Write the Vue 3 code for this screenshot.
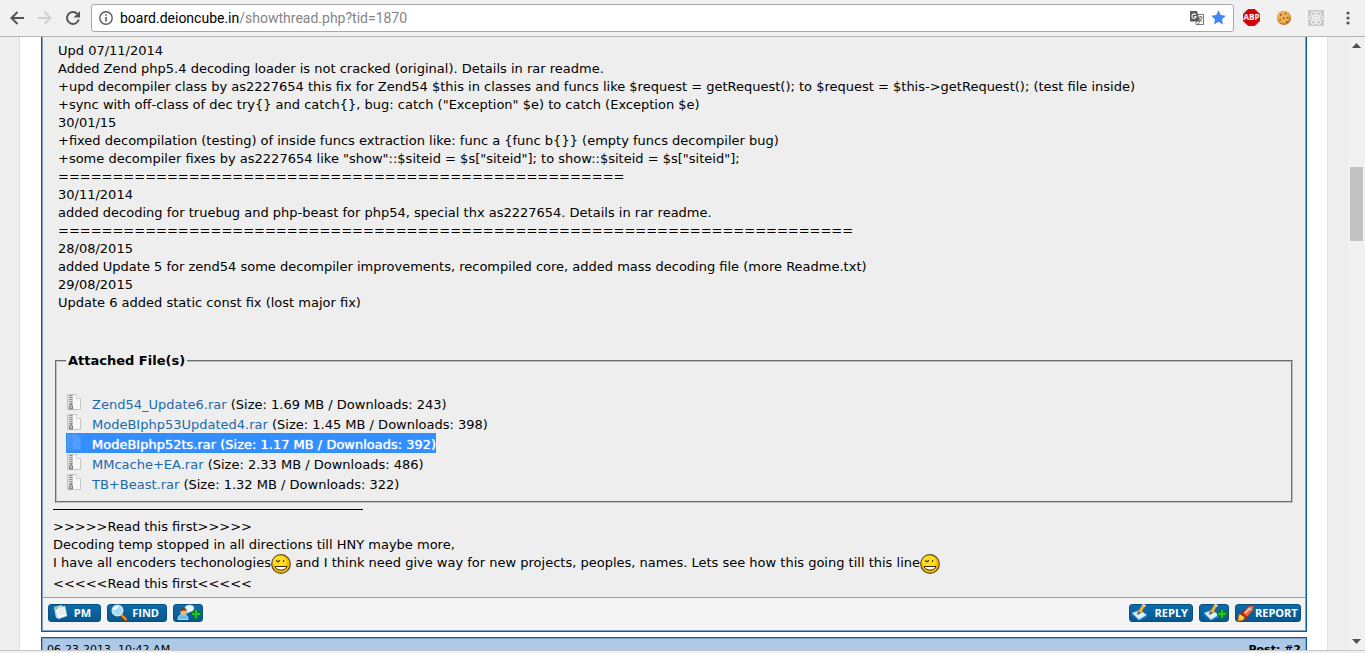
<script setup>
import { ref } from 'vue'

const address = ref('board.deioncube.in/showthread.php?tid=1870')

const lines = [
  'Upd 07/11/2014',
  'Added Zend php5.4 decoding loader is not cracked (original). Details in rar readme.',
  '+upd decompiler class by as2227654 this fix for Zend54 $this in classes and funcs like $request = getRequest(); to $request = $this->getRequest(); (test file inside)',
  '+sync with off-class of dec try{} and catch{}, bug: catch ("Exception" $e) to catch (Exception $e)',
  '30/01/15',
  '+fixed decompilation (testing) of inside funcs extraction like: func a {func b{}} (empty funcs decompiler bug)',
  '+some decompiler fixes by as2227654 like "show"::$siteid = $s["siteid"]; to show::$siteid = $s["siteid"];',
  '='.repeat(52),
  '30/11/2014',
  'added decoding for truebug and php-beast for php54, special thx as2227654. Details in rar readme.',
  '='.repeat(73),
  '28/08/2015',
  'added Update 5 for zend54 some decompiler improvements, recompiled core, added mass decoding file (more Readme.txt)',
  '29/08/2015',
  'Update 6 added static const fix (lost major fix)',
]

const files = [
  { name: 'Zend54_Update6.rar', size: '1.69 MB', downloads: 243 },
  { name: 'ModeBIphp53Updated4.rar', size: '1.45 MB', downloads: 398 },
  { name: 'ModeBIphp52ts.rar', size: '1.17 MB', downloads: 392, selected: true },
  { name: 'MMcache+EA.rar', size: '2.33 MB', downloads: 486 },
  { name: 'TB+Beast.rar', size: '1.32 MB', downloads: 322 },
]
</script>

<template>
  <div class="browser">
    <svg class="defs" aria-hidden="true">
      <symbol id="smile" viewBox="0 0 20 20">
        <circle cx="10" cy="10" r="9.300" fill="#f5bd08" stroke="#5a4a20" stroke-width="1.200" />
        <ellipse cx="9" cy="8" rx="7" ry="6.500" fill="#ffdc20" />
        <path d="M5 6.500l2 1.300 2-1.500M12.600 6v2" fill="none" stroke="#4a3300" stroke-width="1.100" />
        <path d="M4 12.500h12c-1 2.600-3.200 3.600-6 3.600s-5-1-6-3.600z" fill="#fff" stroke="#3d2a00" stroke-width="1" />
      </symbol>
      <symbol id="plus" viewBox="0 0 10 10">
        <path d="M3.500 .5h3v3h3v3h-3v3h-3v-3h-3v-3h3z" fill="#25c425" stroke="#087a16" stroke-width="1" />
      </symbol>
      <symbol id="pen" viewBox="0 0 18 18">
        <path d="M1 9l8-3 7 5-8 5z" fill="#d9efff" stroke="#5fa4dc" stroke-width="1" />
        <path d="M1 10l7 6 8-5v2l-8 4-7-6z" fill="#2c7cc4" />
        <path d="M6 11l1-4 3 2z" fill="#36506a" />
        <path d="M7 8l4-7 3 1-4 7z" fill="#f4b83c" stroke="#ad6c16" stroke-width=".6" />
        <path d="M11 1l1-1 3 1-1 2z" fill="#f7e4c0" />
      </symbol>
    </svg>

    <header class="toolbar">
      <button class="tool" type="button" aria-label="Back">
        <svg width="16" height="16" viewBox="0 0 16 16"><path d="M15 8H3M8.500 2L2.500 8l6 6" fill="none" stroke="#555" stroke-width="2" /></svg>
      </button>
      <button class="tool" type="button" aria-label="Forward" disabled>
        <svg width="16" height="16" viewBox="0 0 16 16"><path d="M1 8h12M7.500 2l6 6-6 6" fill="none" stroke="#d0d0d0" stroke-width="2" /></svg>
      </button>
      <button class="tool" type="button" aria-label="Reload">
        <svg width="16" height="16" viewBox="0 0 16 16"><path d="M13.800 9.500A6 6 0 1 1 12.300 3.800" fill="none" stroke="#555" stroke-width="2" /><path d="M15 1v6.500H8.500z" fill="#555" /></svg>
      </button>
      <div class="omnibox">
        <svg width="14" height="14" viewBox="0 0 14 14"><circle cx="7" cy="7" r="6.200" fill="none" stroke="#5a5a5a" stroke-width="1.400" /><path d="M7 6v4.500M7 3.200v1.600" stroke="#5a5a5a" stroke-width="1.600" /></svg>
        <label class="url">
          <span class="host" aria-hidden="true">board.deioncube.in<i>/showthread.php?tid=1870</i></span>
          <input v-model="address" type="text" aria-label="Address" spellcheck="false" />
        </label>
        <button class="tool" type="button" aria-label="Translate">
          <svg width="14" height="14" viewBox="0 0 14 14"><path d="M6.500 3.500h7v10H6z" fill="#fff" stroke="#777" /><path d="M0 0h7l3 10.500H0z" fill="#5c5c5c" /><path d="M5.900 3.800A2.200 2.200 0 1 0 6 6.300V5.500H4.200" fill="none" stroke="#fff" stroke-width="1.100" /><path d="M8.500 6h4M10.500 5v1M12 6c-.5 2-1.500 3.500-2.500 4.500M9.500 7c.5 1.500 1.500 3 3 4M7.500 13.500l2.500-3" fill="none" stroke="#666" stroke-width=".9" /></svg>
        </button>
        <button class="tool" type="button" aria-label="Bookmark">
          <svg width="15" height="15" viewBox="0 0 15 15"><path d="M7.500 .3l2.200 4.800 5.100.6-3.800 3.500 1 5.300-4.500-2.700L3 14.500l1-5.300L.2 5.700l5.100-.6z" fill="#4285f4" /></svg>
        </button>
      </div>
      <div class="extensions">
        <button class="tool" type="button" aria-label="Adblock Plus">
          <svg width="17" height="17" viewBox="0 0 17 17"><path d="M5 .5h7L16.500 5v7L12 16.500H5L.5 12V5z" fill="#d0000c" stroke="#a80008" stroke-width=".8" /><text x="8.500" y="11" text-anchor="middle" class="abp">ABP</text></svg>
        </button>
        <button class="tool" type="button" aria-label="Cookies">
          <svg width="16" height="16" viewBox="0 0 16 16"><circle cx="8" cy="8" r="7" fill="#c87824" /><circle cx="7.500" cy="7" r="6.300" fill="#edae55" /><path d="M4 4h1.500v1.500H4zM9 3h1.300v1.300H9zM7 7.500h1.400v1.400H7zM3.500 9h1.300v1.300H3.500zM11 7h1.500v1.500H11zM10 11h1.400v1.400H10z" fill="#7b421b" /></svg>
        </button>
        <button class="tool" type="button" aria-label="React tools">
          <svg width="16" height="16" viewBox="0 0 16 16"><path d="M0 0h16v16H0z" fill="#cacaca" /><g fill="none" stroke="#f3f3f3"><ellipse cx="8" cy="8" rx="7" ry="2.700" /><ellipse cx="8" cy="8" rx="7" ry="2.700" transform="rotate(60 8 8)" /><ellipse cx="8" cy="8" rx="7" ry="2.700" transform="rotate(120 8 8)" /></g><circle cx="8" cy="8" r="1.500" fill="#fff" /></svg>
        </button>
        <button class="tool" type="button" aria-label="Menu">
          <svg width="4" height="14" viewBox="0 0 4 14"><g fill="#555"><circle cx="2" cy="2" r="1.600" /><circle cx="2" cy="7" r="1.600" /><circle cx="2" cy="12" r="1.600" /></g></svg>
        </button>
      </div>
    </header>

    <div class="viewport">
      <main class="page">
        <article class="post">
          <div class="body">
            <div class="message">
              <div v-for="(line, i) in lines" :key="i">{{ line }}</div>
            </div>
            <fieldset class="attachments">
              <legend>Attached File(s)</legend>
              <ul>
                <li v-for="file in files" :key="file.name">
                  <span class="file" :class="{ selected: file.selected }">
                    <svg class="zip" width="16" height="20" viewBox="0 0 16 20">
                      <path d="M1.500 1.500h9l4 4v11h-13z" fill="#f8f8f8" stroke="#c6c6c6" />
                      <path d="M10.500 1.500v4h4" fill="#fff" stroke="#ccc" />
                      <path d="M2 2h5v14H2z" fill="#dadada" />
                      <path d="M5 2v10" stroke="#888" stroke-width="3" stroke-dasharray="1 1" />
                      <path d="M3.500 13.500l1-2h1l1 2v2.500h-3z" fill="#bbb" stroke="#777" />
                    </svg>
                    <span><a href="#">{{ file.name }}</a> (Size: {{ file.size }} / Downloads: {{ file.downloads }})</span>
                  </span>
                </li>
              </ul>
            </fieldset>
            <div class="signature">
              <hr />
              <div>&gt;&gt;&gt;&gt;&gt;Read this first&gt;&gt;&gt;&gt;&gt;</div>
              <div>Decoding temp stopped in all directions till HNY maybe more,</div>
              <div class="smiley-line">I have all encoders techonologies<svg class="smiley"><use href="#smile" /></svg> and I think need give way for new projects, peoples, names. Lets see how this going till this line<svg class="smiley"><use href="#smile" /></svg></div>
              <div>&lt;&lt;&lt;&lt;&lt;Read this first&lt;&lt;&lt;&lt;&lt;</div>
            </div>
          </div>
          <footer class="controls">
            <div class="group">
              <button class="action pm" type="button">
                <svg width="18" height="18" viewBox="0 0 18 18"><path d="M2 3l8-2 2 11-8 2z" fill="#c9e6f8" /><path d="M3 5l10-3 2 10-9 3z" fill="#f5faff" stroke="#9db8cf" stroke-width=".6" /><path d="M6 7l6-2M6 9l7-2M7 11l6-2" stroke="#c3d0dc" stroke-width=".7" /><path d="M2 3l4-1-1 4z" fill="#7bd04c" /></svg>
                <span>PM</span>
              </button>
              <button class="action find" type="button">
                <svg width="18" height="18" viewBox="0 0 18 18"><path d="M10 11l5 5" stroke="#7b3d12" stroke-width="3.500" stroke-linecap="round" /><path d="M10.500 11l4.500 4.500" stroke="#f49a35" stroke-width="1.800" stroke-linecap="round" /><circle cx="6.500" cy="6.500" r="5.300" fill="#a5ddf8" stroke="#d5e7f2" stroke-width="1.400" /><path d="M3.500 6c0-2 2-3 3.500-2.500" fill="none" stroke="#fff" stroke-width="2" /></svg>
                <span>FIND</span>
              </button>
              <button class="action icon" type="button" aria-label="Add buddy">
                <svg width="24" height="18" viewBox="0 0 24 18"><path d="M9 2c3-2 8-1 8 2s-3 4-5 4l-3 2 1-3C8 6 7 4 9 2z" fill="#eef6ff" stroke="#9fc5e8" stroke-width=".6" /><path d="M1 15.500c0-4 2-5 5-5s5 1 5 5z" fill="#6bb9f2" stroke="#d2edff" stroke-width=".8" /><circle cx="6.500" cy="8" r="3.200" fill="#efb77a" /><path d="M3 7.500c0-4 6-5 7-1L6 6.500z" fill="#743b1b" /></svg>
                <svg class="add" width="10" height="10"><use href="#plus" /></svg>
              </button>
            </div>
            <div class="group">
              <button class="action reply" type="button">
                <svg width="18" height="18"><use href="#pen" /></svg>
                <span>REPLY</span>
              </button>
              <button class="action icon" type="button" aria-label="Multiquote">
                <svg width="18" height="18"><use href="#pen" /></svg>
                <svg class="add" width="10" height="10"><use href="#plus" /></svg>
              </button>
              <button class="action report" type="button">
                <svg width="18" height="18" viewBox="0 0 18 18"><path d="M1 17l1-6 3-1 3 3-2 3z" fill="#ffd13b" stroke="#ef7a1a" /><path d="M3 9l4-3 5 5-3 5-2-3-3-2z" fill="#a92b13" /><path d="M6 9l5-6 6-2-1 5-6 7z" fill="#f36c3b" stroke="#b9290f" stroke-width=".8" /><path d="M8 9l5-5" stroke="#ffd5bd" stroke-width="1.500" /><circle cx="13" cy="5" r="1.400" fill="#8edaf7" /></svg>
                <span>REPORT</span>
              </button>
            </div>
          </footer>
        </article>
        <article class="post next">
          <div class="post-head"><span>06-23-2013, 10:42 AM</span><strong>Post: #2</strong></div>
        </article>
      </main>
      <div class="scrollbar" aria-hidden="true">
        <svg width="17" height="17" viewBox="0 0 17 17"><path d="M4 11l4.500-5 4.500 5z" fill="#505050" /></svg>
        <div class="track"><div class="thumb"></div></div>
        <svg width="17" height="17" viewBox="0 0 17 17"><path d="M4 6l4.500 5L13 6z" fill="#505050" /></svg>
      </div>
    </div>
    <div class="edge"></div>
  </div>
</template>

<style>
body {
  margin: 0;
  overflow: hidden;
}
</style>

<style scoped>
* {
  box-sizing: border-box;
}
.browser {
  display: flex;
  flex-direction: column;
  height: 100vh;
  background: #eee;
  color: #000;
  font: 13px/18px "DejaVu Sans", Verdana, sans-serif;
}
.defs {
  position: absolute;
  width: 0;
  height: 0;
}
svg {
  display: block;
  flex: none;
}
button {
  padding: 0;
  border: 0;
  background: none;
  font: inherit;
}
.toolbar {
  display: flex;
  align-items: center;
  flex: none;
  gap: 12px;
  height: 37px;
  padding: 0 15px 1px 9px;
  border-bottom: 1px solid #b4b4b4;
  background: #f1f1f1;
}
.omnibox {
  display: flex;
  align-items: center;
  flex: 1;
  gap: 7px;
  height: 28px;
  margin-left: -2px;
  padding: 0 7px;
  border: 1px solid #a9a9a9;
  border-radius: 3px;
  background: #fff;
}
.url {
  position: relative;
  flex: 1;
  font: 14px/18px Roboto, sans-serif;
}
.url i {
  color: #858585;
  font-style: normal;
}
.url input {
  position: absolute;
  inset: 0;
  width: 100%;
  padding: 0;
  border: 0;
  outline: 0;
  background: none;
  color: transparent;
  font: inherit;
}
.extensions {
  display: flex;
  align-items: center;
  gap: 16px;
  margin-left: -3px;
}
.extensions .tool:last-child {
  margin-left: 6px;
}
.abp {
  fill: #fff;
  font: bold 8px "Open Sans", sans-serif;
}
.viewport {
  display: flex;
  flex: 1;
  min-height: 0;
  overflow: hidden;
}
.page {
  flex: 1;
  min-width: 0;
  margin: 0 20px 0 19px;
  padding: 0 20px 0 21px;
  border: solid #e1e1e1;
  border-width: 0 1px;
  background: #fff;
}
.post {
  border: 1px solid #0f5c8e;
  border-top: 0;
  background: #eee;
  box-shadow: inset 1px 0 #81a2c4, inset -1px 0 #81a2c4;
  margin-bottom: 5px;
}
.body {
  padding: 5px 13px 4px 11px;
}
.message {
  padding-left: 5px;
  white-space: nowrap;
}
.attachments {
  min-width: 0;
  margin: 40px 0 0 2px;
  padding: 23px 9px 8px;
  border: 2px groove #c0c0c0;
}
.attachments legend {
  padding: 0 2px;
  font-weight: bold;
}
.attachments ul {
  margin: 0;
  padding: 0;
  list-style: none;
}
.file {
  display: inline-flex;
  gap: 10px;
  height: 20px;
  line-height: 24px;
  vertical-align: top;
  white-space: nowrap;
}
.attachments li {
  height: 20px;
}
.file a {
  color: #1a6aac;
  text-decoration: none;
}
.selected {
  background: #338fff;
}
.selected,
.selected a {
  color: #fff;
  text-shadow: 0 0 1px #fff;
}
.selected .zip {
  opacity: 0.15;
}
.signature {
  white-space: nowrap;
}
.signature hr {
  width: 310px;
  height: 1px;
  margin: 6px 0 8px;
  border: 0;
  background: #000;
}
.smiley-line {
  display: flex;
  height: 21px;
  white-space: pre;
}
.smiley {
  width: 20px;
  height: 20px;
}
.controls {
  display: flex;
  align-items: center;
  justify-content: space-between;
  height: 34px;
  padding: 0 4px 2px 5px;
  border: 1px solid #81a2c4;
  background: #f4f4f4;
}
.group {
  display: flex;
  gap: 6px;
}
.action {
  display: flex;
  align-items: center;
  justify-content: space-between;
  width: 30px;
  height: 18px;
  padding: 0 3px;
  border: 1px solid #0a4f80;
  border-radius: 3px;
  background: linear-gradient(#0b6cac, #06588f);
  color: #fff;
  font: bold 11px/16px "Open Sans", sans-serif;
}
.action.pm {
  width: 53px;
  padding-right: 9px;
}
.action.find {
  width: 60px;
  padding-right: 7px;
}
.action.reply {
  width: 64px;
}
.action.report {
  width: 66px;
}
.action.reply,
.action.report {
  padding: 0 4px 0 1px;
}
.action.icon {
  position: relative;
}
.add {
  position: absolute;
  right: 1px;
  bottom: 2px;
}
.next {
  border-top: 1px solid #0f5c8e;
}
.post-head {
  display: flex;
  justify-content: space-between;
  padding: 2px 4px;
  border: 1px solid #81a2c4;
  background: #accae8;
  font-size: 11px;
}
.scrollbar {
  display: flex;
  flex-direction: column;
  flex: none;
  width: 17px;
  background: #f1f1f1;
}
.track {
  flex: 1;
  padding: 0 2px;
}
.thumb {
  height: 74px;
  margin-top: 113px;
  background: #c1c1c1;
}
.edge {
  flex: none;
  height: 3px;
  border-top: 1px solid #c8c8c8;
  background: #f1f1f1;
}
</style>
